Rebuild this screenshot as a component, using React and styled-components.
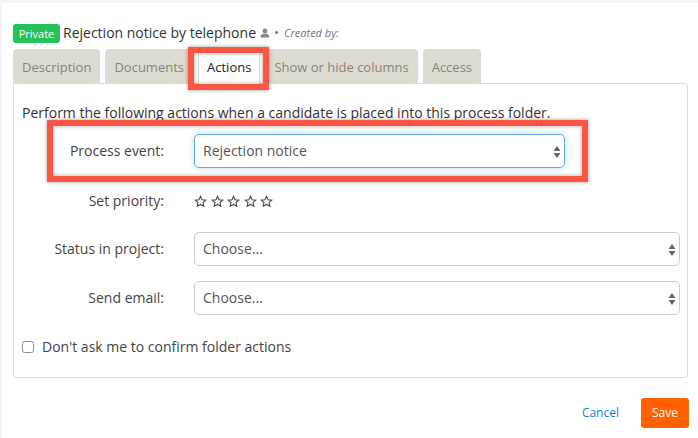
import React from 'react'
import styled, { createGlobalStyle } from 'styled-components'

const Global = createGlobalStyle`
  html, body { margin: 0; padding: 0; background: #f3f3f9; }
  body { font-family: "Open Sans", sans-serif; font-size: 14px; color: #333; }
  * { box-sizing: border-box; }
`

const Modal = styled.div`
  position: relative;
  width: 696px;
  height: 435px;
  margin: 3px 0 0 2px;
  background: #fff;
  padding: 20px 10px 0 11px;
  overflow: hidden;
`

const TitleRow = styled.div`
  display: flex;
  align-items: center;
  height: 19px;
  margin-bottom: 7px;
`

const Badge = styled.span`
  background: #25c257;
  color: #fff;
  font-size: 11px;
  line-height: 19px;
  height: 19px;
  width: 47px;
  margin-top: 2px;
  text-align: center;
  border-radius: 3px;
  margin-right: 3px;
`

const Title = styled.span`
  font-size: 14px;
  color: #333;
  margin-right: 4px;
`

const Meta = styled.span`
  font-size: 11px;
  font-style: italic;
  color: #777;
  margin-left: 6px;
`

const Dot = styled.span`
  width: 3px;
  height: 3px;
  border-radius: 50%;
  background: #777;
  margin-left: 5px;
`

const Tabs = styled.div`
  display: flex;
  gap: 5px;
  height: 34px;
`

const Tab = styled.div`
  height: ${p => (p.$active ? '35px' : '34px')};
  padding: 0 ${p => (p.$active ? '8px' : '9px')};
  line-height: 36px;
  font-size: 13px;
  border-radius: 4px 4px 0 0;
  background: ${p => (p.$active ? '#fff' : '#dedcd2')};
  color: ${p => (p.$active ? '#222' : '#8f8077')};
  border-left: ${p => (p.$active ? '1px solid #dedcd2' : '0')};
  border-right: ${p => (p.$active ? '1px solid #dedcd2' : '0')};
  position: relative;
  z-index: 1;
`

const Panel = styled.div`
  width: 675px;
  height: 295px;
  border: 1px solid #dedcd2;
  border-radius: 0 3px 3px 3px;
  padding: 19px 8px 0 8px;
`

const Intro = styled.p`
  margin: 0 0 11px;
  font-size: 14px;
  line-height: 20px;
`

const Row = styled.div`
  display: grid;
  grid-template-columns: 142px ${p => p.$field || 486}px;
  column-gap: 30px;
  align-items: center;
  height: ${p => p.$height || 34}px;
  margin-bottom: ${p => p.$gap || 0}px;
`

const Label = styled.label`
  text-align: right;
  color: #444;
  font-size: 14px;
  padding-bottom: 2px;
`

const Select = styled.div`
  position: relative;
  height: 34px;
  line-height: 31px;
  padding: 0 8px;
  border-radius: 5px;
  color: #555;
  background: #fff;
  border: 1px solid ${p => (p.$focus ? '#5aaef0' : '#ccc')};
  box-shadow: ${p => (p.$focus ? '0 0 6px rgba(90,174,240,.45)' : 'none')};
`

const Arrows = styled.svg`
  position: absolute;
  right: 2px;
  top: 10px;
`

const Stars = styled.div`
  display: flex;
  gap: 3.5px;
  color: #444;
`

const CheckRow = styled.label`
  display: flex;
  align-items: center;
  gap: 8px;
  margin-top: 22px;
  color: #444;
`

const Box = styled.span`
  width: 12px;
  height: 12px;
  border: 1px solid #8d8d8d;
  border-radius: 2.5px;
  background: #fff;
`

const Footer = styled.div`
  display: flex;
  justify-content: flex-end;
  align-items: center;
  gap: 22px;
  width: 676px;
  margin-top: 20px;
`

const Cancel = styled.a`
  color: #0d83c4;
  font-size: 12px;
  padding-bottom: 2px;
`

const Save = styled.button`
  width: 48px;
  height: 30px;
  background: #ff6000;
  color: #fff;
  border: 0;
  padding: 0 0 2px;
  border-radius: 3px;
  font-family: inherit;
  font-size: 12px;
`

const Highlight = styled.div`
  position: absolute;
  left: ${p => p.$left}px;
  top: ${p => p.$top}px;
  width: ${p => p.$width}px;
  height: ${p => p.$height}px;
  border: 6px solid #fc5544;
  z-index: 3;
  box-shadow: 0 0 4px rgba(0,0,0,.4), inset 0 0 4px rgba(0,0,0,.35);
`

const SelectArrows = () => (
  <Arrows width="10" height="14" viewBox="0 0 10 14">
    <path d="M5 1 L8.5 6 H1.5 Z M5 13 L8.5 8 H1.5 Z" fill="#666" />
  </Arrows>
)

const Star = () => (
  <svg width="13" height="13" viewBox="0 0 24 24" fill="none" stroke="#444" strokeWidth="2">
    <path d="M12 2.5l2.9 6.2 6.8.8-5 4.6 1.4 6.7-6.1-3.4-6.1 3.4 1.4-6.7-5-4.6 6.8-.8z" />
  </svg>
)

const User = () => (
  <svg width="10" height="10" viewBox="0 0 10 10">
    <circle cx="5" cy="3" r="2.4" fill="#888" />
    <path d="M0.6 9.6c0-3 1.8-4 4.4-4s4.4 1 4.4 4z" fill="#888" />
  </svg>
)

const tabs = ['Description', 'Documents', 'Actions', 'Show or hide columns', 'Access']

export default function App() {
  return (
    <>
      <Global />
      <Modal>
        <TitleRow>
          <Badge>Private</Badge>
          <Title>Rejection notice by telephone</Title>
          <User />
          <Dot />
          <Meta>Created by:</Meta>
        </TitleRow>
        <Tabs>
          {tabs.map(t => (
            <Tab key={t} $active={t === 'Actions'}>{t}</Tab>
          ))}
        </Tabs>
        <Panel>
          <Intro>Perform the following actions when a candidate is placed into this process folder.</Intro>
          <Row $gap={23} $field={371}>
            <Label>Process event:</Label>
            <Select $focus>Rejection notice<SelectArrows /></Select>
          </Row>
          <Row $height={16} $gap={25}>
            <Label>Set priority:</Label>
            <Stars>
              <Star /><Star /><Star /><Star /><Star />
            </Stars>
          </Row>
          <Row $gap={15}>
            <Label>Status in project:</Label>
            <Select>Choose...<SelectArrows /></Select>
          </Row>
          <Row>
            <Label>Send email:</Label>
            <Select>Choose...<SelectArrows /></Select>
          </Row>
          <CheckRow><Box />Don't ask me to confirm folder actions</CheckRow>
        </Panel>
        <Footer>
          <Cancel>Cancel</Cancel>
          <Save>Save</Save>
        </Footer>
        <Highlight $left={186} $top={44} $width={81} $height={43} />
        <Highlight $left={45} $top={117} $width={541} $height={62} />
      </Modal>
    </>
  )
}
